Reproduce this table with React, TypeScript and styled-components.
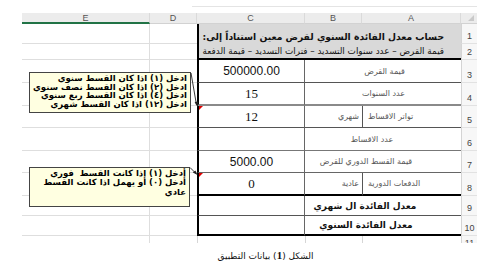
import React from "react";
import styled, { createGlobalStyle, css } from "styled-components";

const GlobalStyle = createGlobalStyle`
  html, body {
    margin: 0;
    padding: 0;
    background: #ffffff;
  }
  body {
    font-family: "DejaVu Sans", sans-serif;
  }
`;

const ARABIC = `"DejaVu Sans", sans-serif`;

type Row = {
  n: number;
  h: number;
  value?: string;
  serif?: boolean;
  label?: string;
  shift?: number;
  bold?: boolean;
  a?: string;
  b?: string;
  line: string;
  flag?: boolean;
};

const rows: Row[] = [
  { n: 3, h: 23, value: "500000.00", label: "قيمة القرض", shift: -3, line: "1px solid #555" },
  { n: 4, h: 23, value: "15", serif: true, label: "عدد السنوات", shift: -1, line: "2px solid #8a8a8a" },
  { n: 5, h: 22, value: "12", serif: true, a: "تواتر الاقساط", b: "شهري", line: "1px solid #555", flag: true },
  { n: 6, h: 23, label: "عدد الاقساط", shift: 22, line: "1px solid #777" },
  { n: 7, h: 22, value: "5000.00", label: "قيمة القسط الدوري للقرض", shift: 34, line: "1px solid #666" },
  { n: 8, h: 23, value: "0", serif: true, a: "الدفعات الدورية", b: "عادية", line: "2px solid #000", flag: true },
  { n: 9, h: 20, label: "معدل الفائدة  ال شهري", shift: 36, bold: true, line: "1px solid #555" },
  { n: 10, h: 20, label: "معدل الفائدة  السنوي", shift: 34, bold: true, line: "2px solid #000" },
];

const Page = styled.div`
  width: 493px;
  height: 274px;
  padding-top: 6px;
  box-sizing: border-box;
  overflow: hidden;
`;

const PageEdge = styled.div`
  margin-left: 192px;
  width: 285px;
  height: 6px;
  border-top: 1px solid #e4e4e4;
`;

const SheetWrap = styled.div`
  position: relative;
  margin-left: 22px;
  width: 455px;
`;

const Sheet = styled.div`
  display: grid;
  grid-template-columns: 128px 47px 108px 57px 99px 16px;
  grid-template-rows: 11px 20px 16px ${rows.map((r) => `${r.h}px`).join(" ")} 7px;
  overflow: hidden;
  & > * {
    box-sizing: border-box;
    min-width: 0;
    overflow: hidden;
    white-space: nowrap;
  }
`;

const ColHead = styled.div<{ $selected?: boolean }>`
  background: #ececec;
  color: #555;
  font: 9px "Liberation Sans", Arial, sans-serif;
  display: flex;
  align-items: center;
  justify-content: center;
  border-right: 1px solid #dadada;
  border-bottom: ${(p) => (p.$selected ? "2px solid #217346" : "1px solid #d2d2d2")};
`;

const Corner = styled.div`
  position: relative;
  background: #ececec;
  border-bottom: 1px solid #d2d2d2;
  &::after {
    content: "";
    position: absolute;
    right: 3px;
    bottom: 2px;
    border-left: 6px solid transparent;
    border-bottom: 6px solid #c9c9c9;
  }
`;

const GridCell = styled.div<{ $edge?: boolean; $last?: boolean }>`
  border-bottom: ${(p) => (p.$last ? "none" : "1px solid #dedede")};
  border-right: ${(p) => (p.$edge ? "1px solid #dedede" : "none")};
`;

const RowNum = styled.div<{ $last?: boolean }>`
  background: #f7f7f7;
  border-left: 1px solid #d4d4d4;
  border-bottom: ${(p) => (p.$last ? "none" : "1px solid #e2e2e2")};
  color: #444;
  font: 9px/10px "Liberation Sans", Arial, sans-serif;
  display: flex;
  justify-content: center;
  ${(p) =>
    p.$last
      ? css`
          align-items: flex-start;
          padding-top: 2px;
        `
      : css`
          align-items: flex-end;
          padding-bottom: 2px;
        `}
`;

const TitleCell = styled.div<{ $sub?: boolean }>`
  grid-column: span 3;
  background: #d9d9d9;
  border-left: 2px solid #000;
  direction: rtl;
  display: flex;
  align-items: center;
  padding-right: 17px;
  font-family: ${ARABIC};
  color: #111;
  ${(p) =>
    p.$sub
      ? css`
          font-size: 8.8px;
          border-bottom: 2px solid #000;
          padding-bottom: 1px;
        `
      : css`
          font-size: 9.2px;
          font-weight: bold;
          padding-top: 4px;
        `}
`;

const ValueCell = styled.div<{ $line: string; $serif?: boolean; $flag?: boolean }>`
  position: relative;
  border-left: 2px solid #000;
  border-right: 1px solid #666;
  border-bottom: ${(p) => p.$line};
  display: flex;
  align-items: center;
  justify-content: center;
  color: #111;
  font-family: ${(p) =>
    p.$serif ? `"Liberation Serif", "Times New Roman", serif` : `"Liberation Sans", Arial, sans-serif`};
  font-size: ${(p) => (p.$serif ? "13px" : "12px")};
  ${(p) =>
    p.$flag &&
    css`
      &::before {
        content: "";
        position: absolute;
        left: 0;
        top: 0;
        border-top: 4px solid #e00000;
        border-right: 4px solid transparent;
      }
    `}
`;

const Label = styled.div<{ $line: string; $shift: number; $bold?: boolean }>`
  grid-column: span 2;
  direction: rtl;
  display: flex;
  align-items: center;
  justify-content: center;
  border-bottom: ${(p) => p.$line};
  font-family: ${ARABIC};
  padding-right: ${(p) => Math.max(0, p.$shift)}px;
  padding-left: ${(p) => Math.max(0, -p.$shift)}px;
  ${(p) =>
    p.$bold
      ? css`
          font-size: 9px;
          font-weight: bold;
          color: #111;
        `
      : css`
          font-size: 8px;
          color: #555;
        `}
`;

const SplitLabel = styled.div<{ $line: string; $side: "a" | "b" }>`
  direction: rtl;
  display: flex;
  align-items: center;
  border-bottom: ${(p) => p.$line};
  font-family: ${ARABIC};
  font-size: 8px;
  color: #555;
  ${(p) =>
    p.$side === "a"
      ? css`
          justify-content: flex-end;
          padding-left: 5px;
          border-left: 1px solid #555;
        `
      : css`
          justify-content: flex-start;
          padding-right: 3px;
        `}
`;

const Stub = styled.div`
  border-left: 1px solid #d6d6d6;
`;

const CommentBox = styled.div<{ $x: number; $y: number; $w: number; $h: number; $lh: number }>`
  position: absolute;
  left: ${(p) => p.$x}px;
  top: ${(p) => p.$y}px;
  width: ${(p) => p.$w}px;
  height: ${(p) => p.$h}px;
  box-sizing: border-box;
  background: #ffffe1;
  border: 1px solid #444;
  direction: rtl;
  text-align: right;
  padding: 1px 3px 0 3px;
  font-family: ${ARABIC};
  font-weight: bold;
  font-size: 8.5px;
  line-height: ${(p) => p.$lh}px;
  color: #000;
  white-space: nowrap;
  overflow: hidden;
`;

const Connectors = styled.svg`
  position: absolute;
  left: 0;
  top: 0;
  pointer-events: none;
`;

const Caption = styled.div`
  margin-top: 5px;
  padding-left: 38px;
  direction: rtl;
  text-align: center;
  font-family: ${ARABIC};
  font-size: 9px;
  line-height: 14px;
  color: #111;
`;

const CaptionNum = styled.span`
  font-family: "Liberation Serif", "Times New Roman", serif;
  font-weight: bold;
  font-size: 11px;
`;

const letters = ["E", "D", "C", "B", "A"];

export default function App() {
  return (
    <>
      <GlobalStyle />
      <Page>
        <PageEdge />
        <SheetWrap>
          <Sheet>
            {letters.map((l) => (
              <ColHead key={l} $selected={l === "E"}>
                {l}
              </ColHead>
            ))}
            <Corner />

            <GridCell $edge />
            <GridCell />
            <TitleCell>حساب معدل الفائدة السنوي لقرض معين استناداً إلى:</TitleCell>
            <RowNum>1</RowNum>

            <GridCell $edge />
            <GridCell />
            <TitleCell $sub>قيمة القرض – عدد سنوات التسديد – فترات التسديد – قيمة الدفعة</TitleCell>
            <RowNum>2</RowNum>

            {rows.map((r) => (
              <React.Fragment key={r.n}>
                <GridCell $edge />
                <GridCell />
                <ValueCell $line={r.line} $serif={r.serif} $flag={r.flag}>
                  {r.value}
                </ValueCell>
                {r.label !== undefined ? (
                  <Label $line={r.line} $shift={r.shift ?? 0} $bold={r.bold}>
                    {r.label}
                  </Label>
                ) : (
                  <>
                    <SplitLabel $line={r.line} $side="b">
                      {r.b}
                    </SplitLabel>
                    <SplitLabel $line={r.line} $side="a">
                      {r.a}
                    </SplitLabel>
                  </>
                )}
                <RowNum>{r.n}</RowNum>
              </React.Fragment>
            ))}

            <GridCell $edge $last />
            <GridCell $last />
            <Stub />
            <Stub />
            <Stub />
            <RowNum $last>11</RowNum>
          </Sheet>

          <CommentBox $x={7} $y={59} $w={162} $h={41} $lh={8.6}>
            ادخل (١) اذا كان القسط سنوي
            <br />
            ادخل (٢) اذا كان القسط نصف سنوي
            <br />
            ادخل (٤) اذا كان القسط ربع سنوي
            <br />
            ادخل (١٢) اذا كان القسط شهري
          </CommentBox>
          <CommentBox $x={7} $y={154} $w={161} $h={40} $lh={9.4}>
            أدخل (١) اذا كانت القسط&nbsp; فوري
            <br />
            أدخل (٠) أو يهمل اذا كانت القسط
            <br />
            عادي
          </CommentBox>

          <Connectors width="455" height="230" viewBox="0 0 455 230">
            <line x1="169" y1="60" x2="174.5" y2="92" stroke="#222" strokeWidth="0.9" />
            <polygon points="175.5,94 172.6,89 176.4,88.6" fill="#222" />
            <line x1="168" y1="154.5" x2="174" y2="160.5" stroke="#222" strokeWidth="0.9" />
            <polygon points="175.5,162 170.8,159.6 173.4,157.4" fill="#222" />
          </Connectors>
        </SheetWrap>
        <Caption>
          الشكل (<CaptionNum>1</CaptionNum>) بيانات التطبيق
        </Caption>
      </Page>
    </>
  );
}
